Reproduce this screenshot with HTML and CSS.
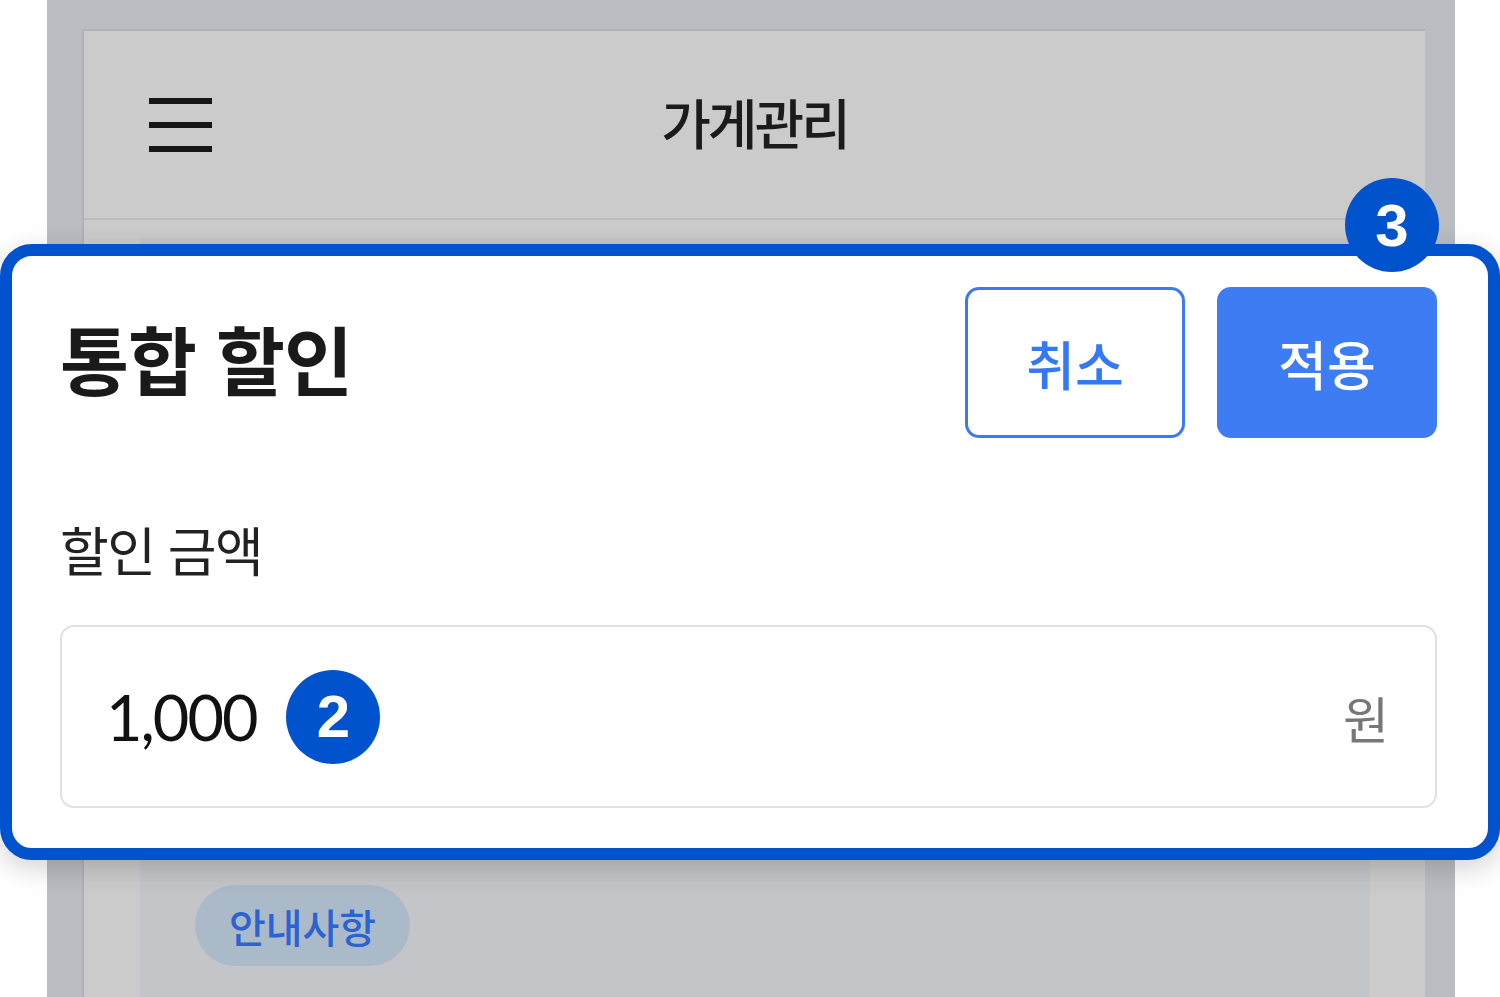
FILE: index.html
```html
<!DOCTYPE html>
<html lang="ko">
<head>
<meta charset="utf-8">
<title>통합 할인</title>
<link rel="stylesheet" href="styles.css">
</head>
<body>
<div class="frame">
  <div class="screen">
    <header class="app-header">
      <div class="menu" aria-label="메뉴">
        <span></span><span></span><span></span>
      </div>
      <h1 class="app-title">가게관리</h1>
      <div></div>
    </header>
    <main class="content">
      <div class="card">
        <span class="pill">안내사항</span>
      </div>
    </main>
  </div>
</div>

<section class="modal">
  <div class="modal-head">
    <h2 class="modal-title">통합 할인</h2>
    <div class="actions">
      <button class="btn btn-outline">취소</button>
      <button class="btn btn-solid">적용</button>
    </div>
  </div>
  <label class="field-label">할인 금액</label>
  <div class="input">
    <div class="input-value">
      <span class="amount">1,000</span>
      <span class="step step-inline">2</span>
    </div>
    <span class="unit">원</span>
  </div>
</section>
<span class="step step-float">3</span>
</body>
</html>
```
FILE: styles.css
```css
html, body {
  margin: 0;
  padding: 0;
}
body {
  width: 1500px;
  height: 997px;
  overflow: hidden;
  background: #ffffff;
  font-family: "Noto Sans CJK KR", "Noto Sans", sans-serif;
  position: relative;
}
.frame {
  margin-left: 47px;
  width: 1408px;
  height: 997px;
  box-sizing: border-box;
  padding: 29px 30px 0 35px;
  background: #b9bcc1;
}
.screen {
  height: 100%;
  box-sizing: border-box;
  background: #cbcbcb;
  border-left: 2px solid #b2b2b2;
  border-top: 2px solid #b2b2b2;
  display: flex;
  flex-direction: column;
}
.app-header {
  height: 189px;
  box-sizing: border-box;
  border-bottom: 2px solid #bdbdbd;
  display: grid;
  grid-template-columns: 1fr auto 1fr;
  align-items: center;
  padding: 0 65px;
}
.menu {
  display: flex;
  flex-direction: column;
  gap: 18px;
  width: 63px;
}
.menu span {
  display: block;
  height: 6px;
  background: #161616;
}
.app-title {
  margin: 0 0 6px;
  font-size: 54px;
  font-weight: 500;
  color: #1b1b1b;
  letter-spacing: -3px;
}
.content {
  flex: 1;
  padding: 18px 55px 0 56px;
  display: flex;
}
.card {
  flex: 1;
  background: #c4c5c9;
  display: flex;
  align-items: flex-end;
  padding: 0 0 31px 55px;
}
.pill {
  display: inline-flex;
  align-items: center;
  justify-content: center;
  width: 215px;
  height: 81px;
  border-radius: 41px;
  background: #abbac9;
  color: #2b63d2;
  font-size: 40px;
  font-weight: 500;
}

.modal {
  position: absolute;
  left: 0;
  top: 244px;
  width: 1500px;
  height: 616px;
  box-sizing: border-box;
  border: 12px solid #0053cc;
  border-radius: 32px;
  background: #ffffff;
  padding: 31px 51px 40px 48px;
  box-shadow: 0 8px 28px rgba(0, 0, 0, 0.18);
  display: flex;
  flex-direction: column;
}
.modal-head {
  display: flex;
  justify-content: space-between;
  align-items: center;
  height: 151px;
}
.modal-title {
  margin: 0 0 10px;
  font-size: 75px;
  font-weight: 600;
  color: #1a1a1a;
  letter-spacing: -1px;
}
.actions {
  display: flex;
  gap: 32px;
}
.btn {
  width: 220px;
  height: 151px;
  box-sizing: border-box;
  border-radius: 14px;
  font-family: "Noto Sans CJK KR", "Noto Sans", sans-serif;
  font-size: 53px;
  font-weight: 500;
  cursor: pointer;
}
.btn-outline {
  background: #ffffff;
  border: 3px solid #3a7af4;
  color: #3478f6;
}
.btn-solid {
  background: #3e7cf3;
  border: none;
  color: #ffffff;
}
.field-label {
  display: block;
  margin-top: 81px;
  font-size: 53px;
  line-height: 60px;
  color: #222222;
  letter-spacing: -1.5px;
}
.input {
  margin-top: 46px;
  height: 184px;
  box-sizing: border-box;
  border: 2px solid #e1e1e1;
  border-radius: 14px;
  display: flex;
  align-items: center;
  justify-content: space-between;
  padding: 0 46px 0 44px;
}
.input-value {
  display: flex;
  align-items: center;
  gap: 30px;
}
.amount {
  font-family: "Lato", "Liberation Sans", sans-serif;
  font-size: 63px;
  color: #111111;
  letter-spacing: -2px;
}
.unit {
  font-size: 50px;
  color: #777777;
}
.step {
  display: inline-flex;
  align-items: center;
  justify-content: center;
  width: 94px;
  height: 94px;
  border-radius: 50%;
  background: #0053cc;
  color: #ffffff;
  font-family: "Liberation Sans", Arial, sans-serif;
  font-weight: 700;
  font-size: 60px;
}
.step-float {
  position: absolute;
  left: 1345px;
  top: 178px;
}
```
